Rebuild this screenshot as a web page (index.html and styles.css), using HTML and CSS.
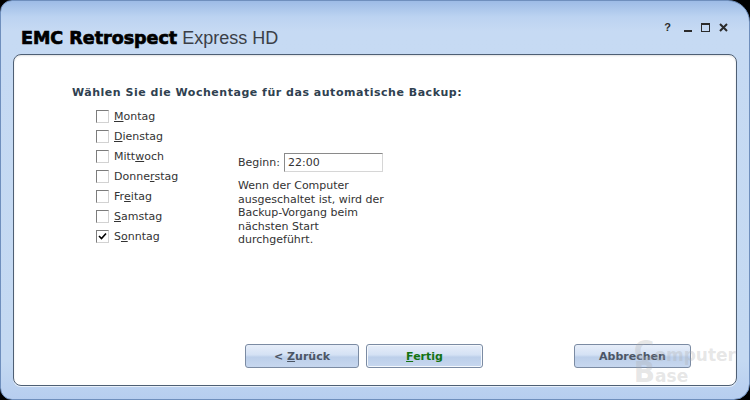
FILE: index.html
```html
<!DOCTYPE html>
<html lang="de">
<head>
  <meta charset="UTF-8" />
  <title>EMC Retrospect Express HD</title>
  <link rel="stylesheet" href="styles.css">
</head>
<body>

<div class="window">
  <!-- TITLE BAR -->
  <div class="titlebar">
    <div class="title"><b>EMC Retrospect</b> Express HD</div>
    <div class="controls">
      <span class="help">?</span>
      <svg width="8" height="9" viewBox="0 0 8 9"><rect x="0" y="7" width="8" height="2" fill="#2b2b2b"/></svg>
      <svg width="9" height="9" viewBox="0 0 9 9"><rect x="0.5" y="0.5" width="8" height="8" fill="none" stroke="#2b2b2b"/><rect x="0" y="0" width="9" height="2" fill="#2b2b2b"/></svg>
      <svg width="9" height="9" viewBox="0 0 9 9"><path d="M1 1 L8 8 M8 1 L1 8" stroke="#2b2b2b" stroke-width="2"/></svg>
    </div>
  </div>

  <!-- CONTENT PANEL -->
  <div class="panel">
    <h1>Wählen Sie die Wochentage für das automatische Backup:</h1>

    <div class="options">
      <div class="days">
        <div class="day"><span class="box"></span><u>M</u>ontag</div>
        <div class="day"><span class="box"></span><u>D</u>ienstag</div>
        <div class="day"><span class="box"></span>Mitt<u>w</u>och</div>
        <div class="day"><span class="box"></span>Donne<u>r</u>stag</div>
        <div class="day"><span class="box"></span>Fr<u>e</u>itag</div>
        <div class="day"><span class="box"></span><u>S</u>amstag</div>
        <div class="day"><span class="box checked"><svg width="9" height="9" viewBox="0 0 9 9"><path d="M1 4 L3.5 6.5 L8 1.5" fill="none" stroke="#000" stroke-width="1.6"/></svg></span>S<u>o</u>nntag</div>
      </div>

      <div class="schedule">
        <div class="start-row">
          <span class="start-label">Beginn:</span>
          <div class="time-field">22:00</div>
        </div>
        <p class="note">Wenn der Computer<br>ausgeschaltet ist, wird der<br>Backup-Vorgang beim<br>nächsten Start<br>durchgeführt.</p>
      </div>
    </div>

    <div class="buttons">
      <button class="btn">&lt; <u>Z</u>urück</button>
      <button class="btn default"><u>F</u>ertig</button>
      <button class="btn cancel">Abbrechen</button>
    </div>

    <div class="watermark"><span class="big">C</span>omputer<br><span class="big">B</span>ase</div>
  </div>
</div>

</body>
</html>
```

FILE: styles.css
```css
body {
  margin: 0;
  background: #000;
  font-family: "DejaVu Sans", Verdana, sans-serif;
}

.window {
  width: 750px;
  height: 400px;
  box-sizing: border-box;
  border: 1px solid #6f8fbd;
  border-radius: 12px 22px 16px 12px;
  background: linear-gradient(#9dbbe6 0, #bcd3f1 16px, #c6daf3 30px, #c4d9f2 360px, #b6cdef 400px);
  display: flex;
  flex-direction: column;
  overflow: hidden;
}

/* title bar */
.titlebar {
  height: 53px;
  display: flex;
  justify-content: space-between;
  padding: 0 21px 0 20px;
}

.title {
  font-family: "Liberation Sans", Arial, sans-serif;
  font-size: 18px;
  line-height: 20px;
  padding-top: 27px;
  color: #3a3f47;
}

.title b {
  font-family: "DejaVu Sans", sans-serif;
  font-weight: bold;
  font-size: 17.5px;
  letter-spacing: 0;
  -webkit-text-stroke: 0.7px #000;
  color: #000;
  margin-right: 0;
}

.controls {
  display: flex;
  align-items: center;
  gap: 9px;
  height: 20px;
  padding-top: 16px;
}

.help {
  font-family: "Liberation Sans", Arial, sans-serif;
  font-weight: bold;
  font-size: 11px;
  color: #2b2b2b;
  margin-right: 4px;
}

/* white content panel */
.panel {
  flex: 1;
  margin: 0 12px 13px 12px;
  background: #fff;
  border: 1px solid #4e5f74;
  border-radius: 8px;
  box-shadow: 0 1px 0 #e8f0fb, inset 0 1px 2px rgba(0,0,0,0.12);
  padding: 31px 0 17px 58px;
  display: flex;
  flex-direction: column;
  position: relative;
  font-size: 11px;
  color: #333;
}

h1 {
  margin: 0;
  font-size: 11px;
  font-weight: bold;
  line-height: 14px;
  color: #2f4150;
  letter-spacing: 0.52px;
}

.options {
  display: flex;
  margin-top: 6px;
}

.days {
  width: 142px;
  padding-left: 24px;
}

.day {
  height: 20px;
  display: flex;
  align-items: center;
  color: #333;
}

.day u { text-decoration-thickness: 1px; }

.box {
  width: 11px;
  height: 11px;
  border: 1px solid;
  border-color: #7c7c7c #d2d2d2 #d2d2d2 #7c7c7c;
  background: #fff;
  margin-right: 5px;
  display: flex;
  align-items: center;
  justify-content: center;
}

.schedule {
  padding-top: 47px;
}

.start-row {
  display: flex;
  align-items: center;
}

.start-label {
  width: 46px;
}

.time-field {
  width: 94px;
  height: 17px;
  line-height: 17px;
  padding-left: 3px;
  border: 1px solid;
  border-color: #8a8a8a #d6d6d6 #d6d6d6 #8a8a8a;
  color: #333;
}

.note {
  margin: 7px 0 0 0;
  line-height: 13.5px;
  color: #333;
}

/* bottom buttons */
.buttons {
  margin-top: auto;
  display: flex;
  gap: 7px;
  padding-left: 173px;
}

.btn {
  width: 114px;
  height: 24px;
  border: 1px solid #7b8ba3;
  border-radius: 3px;
  background: linear-gradient(#e7eef9 0, #d4e1f4 45%, #bccfea 55%, #c7d7ef 100%);
  font-family: "DejaVu Sans", Verdana, sans-serif;
  font-size: 11px;
  font-weight: bold;
  color: #4c5666;
  padding: 0;
}

.btn.default {
  width: 117px;
  color: #137313;
  box-shadow: inset 0 0 0 1px #f4f8fd;
}

.btn.cancel {
  width: 117px;
  margin-left: 84px;
}

/* faint corner watermark */
.watermark {
  position: absolute;
  right: 0;
  bottom: 0;
  font-family: "DejaVu Sans", sans-serif;
  font-weight: bold;
  font-size: 17px;
  line-height: 17px;
  color: rgba(170,170,170,0.3);
  pointer-events: none;
}

.watermark .big {
  font-size: 28px;
}
```
